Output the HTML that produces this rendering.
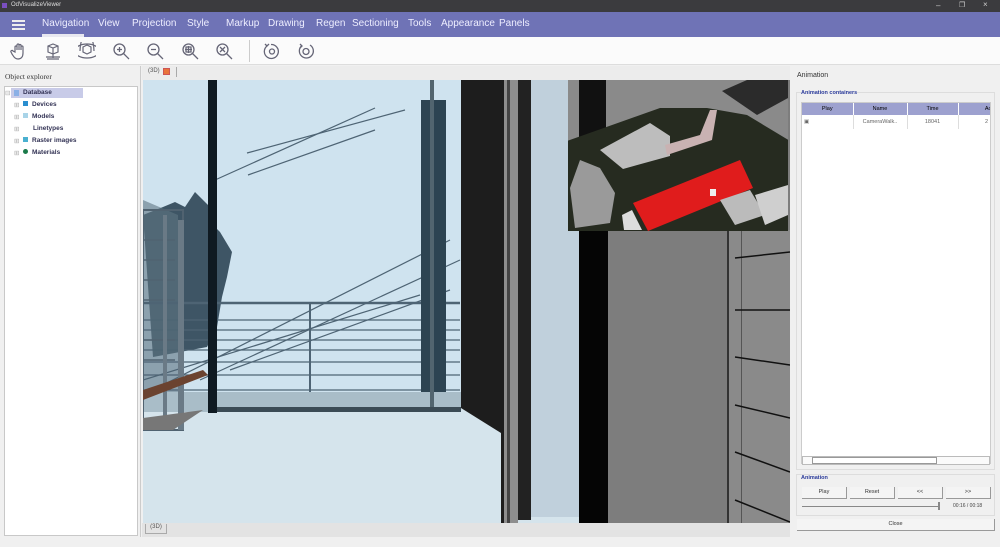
<!DOCTYPE html>
<html><head><meta charset="utf-8"><style>
*{margin:0;padding:0;box-sizing:border-box}
body{width:1000px;height:547px;overflow:hidden;background:#f0f0f0;font-family:"Liberation Sans",sans-serif;position:relative}
.a{position:absolute}
.menu span{position:absolute;top:6px;font-size:10px;color:#eef}
.tb svg{position:absolute;top:5px}
.tree div{position:absolute;font-size:6.5px;font-weight:bold;color:#335;white-space:nowrap}
th,td{font-size:5.5px;font-weight:normal}
.btn{position:absolute;height:12px;background:#f4f4f4;border:1px solid #999;border-width:0 1px 1px 0;font-size:5.5px;text-align:center;line-height:11px;color:#333}
</style></head><body>
<div class="a" style="left:0;top:0;width:1000px;height:12px;background:#3b3b3e"></div>
<div class="a" style="left:2px;top:3px;width:5px;height:5px;background:#7a4fc0"></div>
<div class="a" style="left:11px;top:2px;font-size:6px;color:#ddd">OdVisualizeViewer</div>
<div class="a" style="left:936px;top:1px;font-size:8px;color:#ccc">–</div>
<div class="a" style="left:959px;top:1px;font-size:7px;color:#ccc">❐</div>
<div class="a" style="left:983px;top:0px;font-size:8px;color:#ccc">×</div>
<div class="a menu" style="left:0;top:12px;width:1000px;height:25px;background:#6f73b6">
<div class="a" style="left:12px;top:8px;width:13px;height:2px;background:#eee;box-shadow:0 4px 0 #eee,0 8px 0 #eee"></div>
<span style="left:42px">Navigation</span><span style="left:98px">View</span><span style="left:132px">Projection</span><span style="left:187px">Style</span><span style="left:226px">Markup</span><span style="left:268px">Drawing</span><span style="left:316px">Regen</span><span style="left:352px">Sectioning</span><span style="left:408px">Tools</span><span style="left:441px">Appearance</span><span style="left:499px">Panels</span>
<div class="a" style="left:42px;top:22px;width:42px;height:3px;background:#e8e8f0"></div>
</div>
<div class="a tb" style="left:0;top:37px;width:1000px;height:28px;background:#fbfbfb;border-bottom:1px solid #ddd">
<svg style="left:10px" width="18" height="18" viewBox="0 0 18 18" fill="none" stroke="#667" stroke-width="1.2"><path d="M5 10V5a1 1 0 012 0v3V3a1 1 0 012 0v5V3.5a1 1 0 012 0V8V5a1 1 0 012 0v6c0 4-2 6-5 6s-4-2-6-5l-1-2a1 1 0 012-1z"/></svg>
<svg style="left:44px" width="18" height="20" viewBox="0 0 18 20" fill="none" stroke="#667" stroke-width="1.2"><path d="M4 4l5-2 5 2v6l-5 2-5-2zM4 4l5 2 5-2M9 6v6M9 12v4M3 17h12M2 15h14"/></svg>
<svg style="left:78px" width="18" height="18" viewBox="0 0 18 18" fill="none" stroke="#667" stroke-width="1.2"><path d="M9 2a7 4 0 010 14a7 4 0 010-14zM2 9a3 7 0 0114 0"/><path d="M5 5l4-2 4 2v5l-4 2-4-2z"/></svg>
<svg style="left:112px" width="18" height="18" viewBox="0 0 18 18" fill="none" stroke="#667" stroke-width="1.3"><circle cx="7.5" cy="7.5" r="5.5"/><path d="M11.5 11.5L17 17M7.5 5v5M5 7.5h5"/></svg>
<svg style="left:146px" width="18" height="18" viewBox="0 0 18 18" fill="none" stroke="#667" stroke-width="1.3"><circle cx="7.5" cy="7.5" r="5.5"/><path d="M11.5 11.5L17 17M5 7.5h5"/></svg>
<svg style="left:181px" width="18" height="18" viewBox="0 0 18 18" fill="none" stroke="#667" stroke-width="1.3"><circle cx="7.5" cy="7.5" r="5.5"/><path d="M11.5 11.5L17 17M5 5h5v5H5zM7.5 4v7M4 7.5h7"/></svg>
<svg style="left:215px" width="18" height="18" viewBox="0 0 18 18" fill="none" stroke="#667" stroke-width="1.3"><circle cx="7.5" cy="7.5" r="5.5"/><path d="M11.5 11.5L17 17M5 5l5 5M10 5l-5 5"/></svg>
<div class="a" style="left:249px;top:3px;width:1px;height:22px;background:#ccc"></div>
<svg style="left:263px" width="18" height="18" viewBox="0 0 18 18" fill="none" stroke="#667" stroke-width="1.3"><path d="M4 4a7 7 0 104-1.5"/><path d="M2 2l2 2 2-2"/><circle cx="9" cy="9.5" r="2.5"/></svg>
<svg style="left:297px" width="18" height="18" viewBox="0 0 18 18" fill="none" stroke="#667" stroke-width="1.3"><path d="M5 3.5a7 7 0 108-.5"/><path d="M3 2l2 2-2 2"/><circle cx="9" cy="9.5" r="3"/></svg>
</div>
<div class="a" style="left:0;top:66px;width:141px;height:471px;background:#f0f0f0;border-right:1px solid #ccc"></div>
<div class="a" style="left:5px;top:72px;font-size:7.5px;font-family:'Liberation Serif',serif;color:#333">Object explorer</div>
<div class="a" style="left:4px;top:86px;width:134px;height:450px;background:#fff;border:1px solid #c8c8c8"></div>
<div class="a tree">
<div style="left:11px;top:88px;width:72px;height:10px;background:#c8cbe8"></div>
<div style="left:5px;top:89px;color:#aaa;font-weight:normal">⊟</div>
<div style="left:14px;top:90px;width:5px;height:6px;background:#8ab0e6"></div>
<div style="left:23px;top:89px">Database</div>
<div style="left:14px;top:101px;color:#aaa;font-weight:normal">⊞</div><div style="left:23px;top:101px;width:5px;height:5px;background:#2a8ecf"></div><div style="left:32px;top:101px">Devices</div>
<div style="left:14px;top:113px;color:#aaa;font-weight:normal">⊞</div><div style="left:23px;top:113px;width:5px;height:5px;background:#a9d4e8"></div><div style="left:32px;top:113px">Models</div>
<div style="left:14px;top:125px;color:#aaa;font-weight:normal">⊞</div><div style="left:33px;top:125px">Linetypes</div>
<div style="left:14px;top:137px;color:#aaa;font-weight:normal">⊞</div><div style="left:23px;top:137px;width:5px;height:5px;background:#4ab0d0"></div><div style="left:32px;top:137px">Raster images</div>
<div style="left:14px;top:149px;color:#aaa;font-weight:normal">⊞</div><div style="left:23px;top:149px;width:5px;height:5px;border-radius:3px;background:#1b7a4a"></div><div style="left:32px;top:149px">Materials</div>
</div>
<div class="a" style="left:142px;top:66px;width:648px;height:14px;background:#ececec"></div>
<div class="a" style="left:148px;top:68px;font-size:6px;color:#555">(3D)</div>
<div class="a" style="left:163px;top:68px;width:7px;height:7px;background:#e9733a;border:1px solid #c55"></div>
<div class="a" style="left:176px;top:67px;width:1px;height:10px;background:#aaa"></div>
<svg class="a" style="left:143px;top:80px" width="647" height="443" viewBox="143 80 647 443">
<defs><clipPath id="ic"><rect x="568" y="80" width="220" height="151"/></clipPath></defs>
<rect x="143" y="80" width="647" height="443" fill="#d5e4ec"/>
<rect x="143" y="80" width="318" height="332" fill="#cfe3ef"/>
<path d="M143 215l20-8 12-5 10 5 10-15 5 5 10 10 0 15 10 10 12 20-5 25-5 20-5 30-10 20-54 10z" fill="#3e5565"/>
<path d="M143 200l35 15v195h-35z" fill="#5f7482" opacity=".6"/>
<g stroke="#4e6474" stroke-width="1.2">
<line x1="143" y1="303" x2="460" y2="303" stroke-width="2.5"/>
<line x1="143" y1="320" x2="460" y2="320"/><line x1="143" y1="330" x2="460" y2="330"/><line x1="143" y1="340" x2="460" y2="340"/><line x1="143" y1="350" x2="460" y2="350"/><line x1="143" y1="362" x2="460" y2="362"/><line x1="143" y1="375" x2="460" y2="375"/><line x1="143" y1="390" x2="460" y2="390"/>
<line x1="310" y1="303" x2="310" y2="392" stroke-width="2"/>
<line x1="215" y1="180" x2="375" y2="108"/><line x1="247" y1="153" x2="405" y2="110"/><line x1="248" y1="175" x2="375" y2="130"/>
<line x1="143" y1="395" x2="450" y2="240"/><line x1="200" y1="380" x2="460" y2="260"/><line x1="230" y1="370" x2="450" y2="290"/><line x1="143" y1="380" x2="420" y2="295"/>
</g>
<rect x="143" y="392" width="318" height="20" fill="#a9bdc8"/>
<rect x="143" y="210" width="40" height="220" fill="none" stroke="#506270" stroke-width="2"/>
<g stroke="#506270" stroke-width="1.5"><line x1="143" y1="240" x2="175" y2="240"/><line x1="143" y1="260" x2="175" y2="260"/><line x1="143" y1="280" x2="175" y2="280"/><line x1="143" y1="300" x2="175" y2="300"/><line x1="143" y1="340" x2="175" y2="340"/><line x1="143" y1="360" x2="175" y2="360"/></g>
<rect x="163" y="215" width="4" height="215" fill="#6a7a86"/><rect x="178" y="220" width="6" height="210" fill="#6a7a86"/>
<path d="M143 390l60-20 5 5-65 25z" fill="#6b4330"/>
<path d="M143 418l60-8-30 20h-30z" fill="#777"/>
<rect x="208" y="80" width="9" height="333" fill="#0f1a22"/>
<rect x="421" y="100" width="25" height="292" fill="#2d4452"/><rect x="430" y="80" width="4" height="330" fill="#52656f"/>
<rect x="217" y="407" width="244" height="5" fill="#3b4b55"/>
<path d="M461 80h43v443h-3l0-90-40-25z" fill="#1d1d1d"/>
<rect x="504" y="80" width="14" height="443" fill="#8e8e8e"/><rect x="507" y="80" width="3" height="443" fill="#444"/>
<rect x="518" y="80" width="13" height="440" fill="#222"/>
<rect x="531" y="80" width="48" height="437" fill="#c0d0dc"/>
<rect x="579" y="80" width="29" height="443" fill="#050505"/>
<rect x="608" y="80" width="182" height="443" fill="#7d7d7d"/>
<rect x="728" y="230" width="62" height="293" fill="#8a8a8a"/><rect x="727" y="230" width="2" height="293" fill="#333"/><rect x="741" y="230" width="1" height="293" fill="#555"/>
<g stroke="#111" stroke-width="1.5"><line x1="735" y1="258" x2="790" y2="252"/><line x1="735" y1="310" x2="790" y2="310"/><line x1="735" y1="357" x2="790" y2="365"/><line x1="735" y1="405" x2="790" y2="418"/><line x1="735" y1="452" x2="790" y2="472"/><line x1="735" y1="500" x2="790" y2="522"/></g>
<g clip-path="url(#ic)">
<rect x="568" y="80" width="220" height="151" fill="#8a8a8a"/>
<rect x="579" y="80" width="27" height="60" fill="#111"/>
<path d="M722 91l25-11h41v18l-31 17z" fill="#2b2b2b"/>
<path d="M567 141l93-33 47 0 40 7 43 26v90H567z" fill="#262b20"/>
<path d="M600 150l50-27 20 13v20l-47 13z" fill="#bdbdbd"/>
<path d="M665 145l35-10 10-25 7 0-5 30-45 15z" fill="#c9b2b2"/>
<path d="M580 160l20 8 15 25-5 30-35 5-5-40z" fill="#9a9a9a"/>
<ellipse cx="595" cy="217" rx="15" ry="7" fill="#9a9a9a"/>
<path d="M633 203l107-43 13 28-105 43z" fill="#e01c1c"/>
<rect x="710" y="189" width="6" height="7" fill="#eee"/>
<path d="M622 215l10-5 10 20h-18z" fill="#ddd"/><path d="M720 200l30-10 15 25-30 10z" fill="#bbb"/>
<path d="M755 195l33-10v30l-23 10z" fill="#cfcfcf"/>
</g>
</svg>
<div class="a" style="left:142px;top:523px;width:648px;height:14px;background:#e3e3e3"></div>
<div class="a" style="left:145px;top:524px;width:22px;height:10px;border:1px solid #aaa;border-top:0;font-size:6px;color:#555;text-align:center">(3D)</div>
<div class="a" style="left:790px;top:66px;width:210px;height:481px;background:#f0f0f0"></div>
<div class="a" style="left:797px;top:72px;font-size:7px;color:#333">Animation</div>
<div class="a" style="left:796px;top:92px;width:199px;height:378px;border:1px solid #ddd"></div>
<div class="a" style="left:801px;top:90px;font-size:5.5px;color:#2a3a9a;background:#f0f0f0;font-weight:bold">Animation containers</div>
<div class="a" style="left:801px;top:102px;width:190px;height:362px;background:#fff;border:1px solid #ccc;overflow:hidden">
<table style="border-collapse:collapse;width:220px">
<tr style="background:#9da1cf;height:12px"><th style="width:51px;border-right:1px solid #fff">Play</th><th style="width:54px;border-right:1px solid #fff">Name</th><th style="width:51px;border-right:1px solid #fff">Time</th><th>Actv</th></tr>
<tr style="height:14px;color:#666"><td style="border-right:1px solid #ddd;padding-left:2px">▣</td><td style="border-right:1px solid #ddd;text-align:center">CameraWalk..</td><td style="border-right:1px solid #ddd;text-align:center">18041</td><td style="text-align:right;padding-right:34px">2</td></tr>
</table>
</div>
<div class="a" style="left:802px;top:456px;width:188px;height:9px;border:1px solid #bbb;background:#fafafa"></div>
<div class="a" style="left:812px;top:457px;width:125px;height:7px;border:1px solid #999;background:#fff"></div>
<div class="a" style="left:796px;top:474px;width:199px;height:42px;border:1px solid #ddd"></div>
<div class="a" style="left:801px;top:475px;font-size:5.5px;color:#2a3a9a;font-weight:bold">Animation</div>
<div class="btn" style="left:802px;top:487px;width:45px">Play</div>
<div class="btn" style="left:850px;top:487px;width:45px">Reset</div>
<div class="btn" style="left:898px;top:487px;width:45px">&lt;&lt;</div>
<div class="btn" style="left:946px;top:487px;width:45px">&gt;&gt;</div>
<div class="a" style="left:802px;top:506px;width:138px;height:1px;background:#888"></div>
<div class="a" style="left:938px;top:502px;width:2px;height:8px;background:#888"></div>
<div class="a" style="left:953px;top:503px;font-size:5px;color:#444">00:16 / 00:18</div>
<div class="btn" style="left:797px;top:519px;width:198px;height:12px">Close</div>
</body></html>
